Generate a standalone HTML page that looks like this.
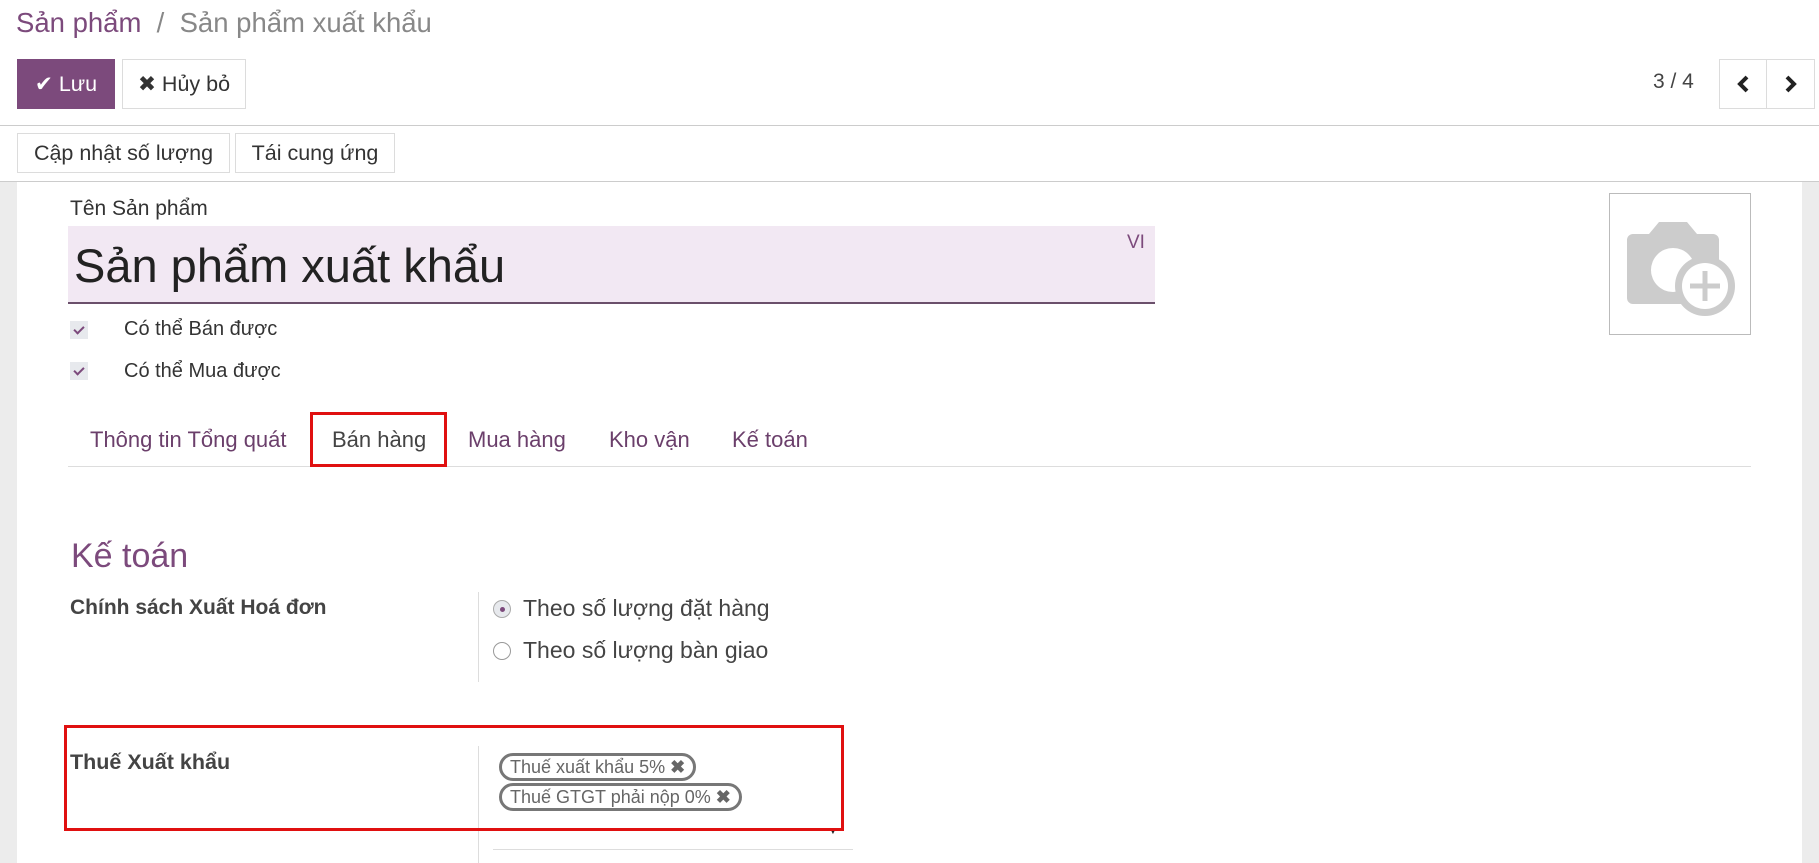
<!DOCTYPE html>
<html><head><meta charset="utf-8"><style>
*{box-sizing:border-box;margin:0;padding:0}
body{width:1819px;height:863px;overflow:hidden;background:#fff;font-family:"Liberation Sans",sans-serif;color:#4c4c4c;position:relative}
.a{position:absolute;white-space:nowrap}
.btn{position:absolute;border:1px solid #dcdcdc;background:#fff;color:#333;font-size:21.5px;display:flex;align-items:center;justify-content:center}
.strip{position:absolute;top:182px;bottom:0;background:#ececec}
.cb{position:absolute;width:18px;height:18px;background:#e7e9ed}
.cb:after{content:"";position:absolute;left:6px;top:3px;width:4px;height:8px;border:solid #7c4a7c;border-width:0 2px 2px 0;transform:rotate(45deg)}
.tag{position:absolute;border:3px solid #777;border-radius:14px;font-size:18px;color:#666;padding:0 8px;height:28px;line-height:22px}
</style></head><body>
<div class="a" style="left:16px;top:7px;font-size:27.5px;color:#7c4a7c">Sản phẩm <span style="color:#888">&nbsp;/&nbsp; Sản phẩm xuất khẩu</span></div>
<div class="btn" style="left:17px;top:59px;width:98px;height:50px;background:#7c4a7c;border-color:#7c4a7c;color:#fff">✔&nbsp;Lưu</div>
<div class="btn" style="left:122px;top:59px;width:124px;height:50px">✖&nbsp;Hủy bỏ</div>
<div class="a" style="left:1653px;top:70px;font-size:21px;color:#444">3 / 4</div>
<div class="btn" style="left:1719px;top:59px;width:48px;height:50px"><svg width="16" height="20" viewBox="0 0 16 20"><path d="M12 3L5 10l7 7" fill="none" stroke="#222" stroke-width="4"/></svg></div>
<div class="btn" style="left:1766px;top:59px;width:49px;height:50px"><svg width="16" height="20" viewBox="0 0 16 20"><path d="M4 3l7 7-7 7" fill="none" stroke="#222" stroke-width="4"/></svg></div>
<div class="a" style="left:0;top:125px;width:1819px;height:1px;background:#ccc"></div>
<div class="btn" style="left:17px;top:133px;width:213px;height:40px">Cập nhật số lượng</div>
<div class="btn" style="left:235px;top:133px;width:160px;height:40px">Tái cung ứng</div>
<div class="a" style="left:0;top:181px;width:1819px;height:1px;background:#ccc"></div>
<div class="strip" style="left:0;width:17px"></div>
<div class="strip" style="left:1802px;width:17px"></div>
<div class="a" style="left:70px;top:197px;font-size:21px;color:#333">Tên Sản phẩm</div>
<div class="a" style="left:68px;top:226px;width:1087px;height:78px;background:#f2e8f3;border-bottom:2px solid #6b506b"></div>
<div class="a" style="left:74px;top:238px;font-size:47px;color:#222">Sản phẩm xuất khẩu</div>
<div class="a" style="left:1127px;top:232px;font-size:19px;color:#7c4a7c">VI</div>
<div class="a" style="left:1609px;top:193px;width:142px;height:142px;border:1px solid #bbb"></div>
<svg class="a" style="left:1625px;top:218px" width="112" height="100" viewBox="0 0 112 100"><path d="M8 16h16l10-12h28l10 12h16a6 6 0 0 1 6 6v58a6 6 0 0 1-6 6H8a6 6 0 0 1-6-6V22a6 6 0 0 1 6-6z" fill="#ccc"/><circle cx="48" cy="52" r="22" fill="#fff"/><circle cx="80" cy="68" r="30" fill="#ccc"/><circle cx="80" cy="68" r="23" fill="#fff"/><path d="M80 53v30M65 68h30" stroke="#ccc" stroke-width="5"/></svg>
<div class="cb" style="left:70px;top:321px"></div>
<div class="a" style="left:124px;top:318px;font-size:20px;color:#333">Có thể Bán được</div>
<div class="cb" style="left:70px;top:362px"></div>
<div class="a" style="left:124px;top:360px;font-size:20px;color:#333">Có thể Mua được</div>
<div class="a" style="left:68px;top:466px;width:1683px;height:1px;background:#ddd"></div>
<div class="a" style="left:90px;top:427px;font-size:22px;color:#6b3f6b">Thông tin Tổng quát</div>
<div class="a" style="left:310px;top:412px;width:137px;height:55px;border:3px solid #e01010"></div>
<div class="a" style="left:332px;top:427px;font-size:22px;color:#444">Bán hàng</div>
<div class="a" style="left:468px;top:427px;font-size:22px;color:#6b3f6b">Mua hàng</div>
<div class="a" style="left:609px;top:427px;font-size:22px;color:#6b3f6b">Kho vận</div>
<div class="a" style="left:732px;top:427px;font-size:22px;color:#6b3f6b">Kế toán</div>
<div class="a" style="left:71px;top:537px;font-size:34px;color:#7c4a7c">Kế toán</div>
<div class="a" style="left:70px;top:596px;font-size:21px;font-weight:bold;color:#444">Chính sách Xuất Hoá đơn</div>
<div class="a" style="left:478px;top:592px;width:1px;height:90px;background:#ddd"></div>
<div class="a" style="left:493px;top:600px;width:18px;height:18px;border:1px solid #aaa;border-radius:50%;background:#e7e9ed"><div style="margin:6px;width:5px;height:5px;border-radius:50%;background:#7c4a7c"></div></div>
<div class="a" style="left:523px;top:595px;font-size:23px;color:#444">Theo số lượng đặt hàng</div>
<div class="a" style="left:493px;top:642px;width:18px;height:18px;border:1px solid #999;border-radius:50%"></div>
<div class="a" style="left:523px;top:637px;font-size:23px;color:#444">Theo số lượng bàn giao</div>
<div class="a" style="left:478px;top:746px;width:1px;height:117px;background:#ddd"></div>
<div class="a" style="left:70px;top:750px;font-size:21.5px;font-weight:bold;color:#444">Thuế Xuất khẩu</div>
<div class="tag" style="left:499px;top:753px">Thuế xuất khẩu 5% <b>✖</b></div>
<div class="tag" style="left:499px;top:783px">Thuế GTGT phải nộp 0% <b>✖</b></div>
<div class="a" style="left:828px;top:826px;font-size:10px;color:#222">▼</div>
<div class="a" style="left:493px;top:849px;width:360px;height:1px;background:#ddd"></div>
<div class="a" style="left:64px;top:725px;width:780px;height:106px;border:3px solid #e01010"></div>
</body></html>
